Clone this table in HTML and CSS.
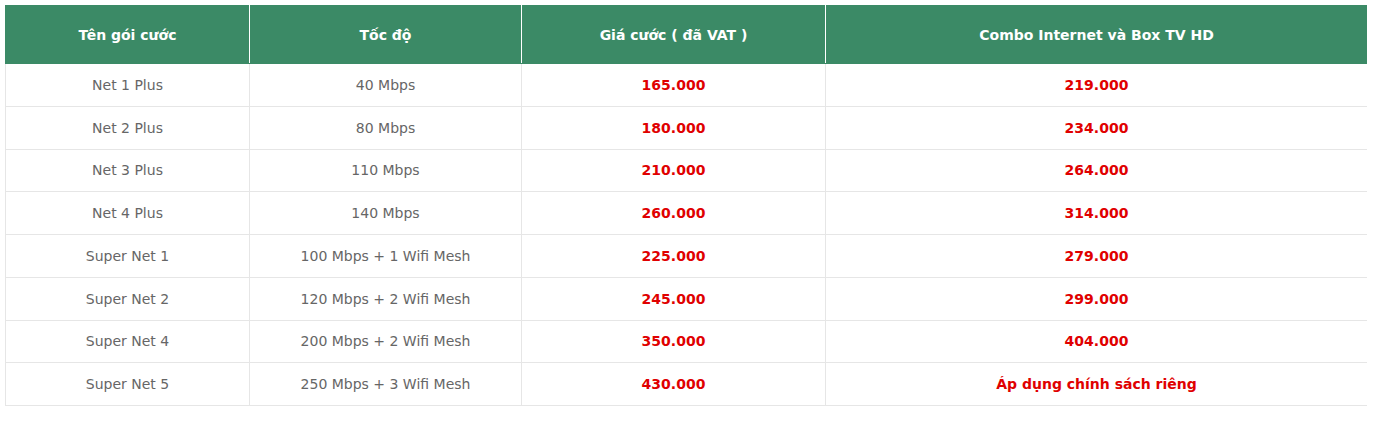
FILE: index.html
```html
<!DOCTYPE html>
<html lang="vi">
<head>
<meta charset="utf-8">
<title>Bảng giá</title>
<link rel="stylesheet" href="styles.css">
</head>
<body>
<table class="price-table">
  <colgroup>
    <col class="c1"><col class="c2"><col class="c3"><col class="c4">
  </colgroup>
  <thead>
    <tr>
      <th>Tên gói cước</th>
      <th>Tốc độ</th>
      <th>Giá cước ( đã VAT )</th>
      <th>Combo Internet và Box TV HD</th>
    </tr>
  </thead>
  <tbody>
    <tr><td>Net 1 Plus</td><td>40 Mbps</td><td class="price">165.000</td><td class="price">219.000</td></tr>
    <tr><td>Net 2 Plus</td><td>80 Mbps</td><td class="price">180.000</td><td class="price">234.000</td></tr>
    <tr><td>Net 3 Plus</td><td>110 Mbps</td><td class="price">210.000</td><td class="price">264.000</td></tr>
    <tr><td>Net 4 Plus</td><td>140 Mbps</td><td class="price">260.000</td><td class="price">314.000</td></tr>
    <tr><td>Super Net 1</td><td>100 Mbps + 1 Wifi Mesh</td><td class="price">225.000</td><td class="price">279.000</td></tr>
    <tr><td>Super Net 2</td><td>120 Mbps + 2 Wifi Mesh</td><td class="price">245.000</td><td class="price">299.000</td></tr>
    <tr><td>Super Net 4</td><td>200 Mbps + 2 Wifi Mesh</td><td class="price">350.000</td><td class="price">404.000</td></tr>
    <tr><td>Super Net 5</td><td>250 Mbps + 3 Wifi Mesh</td><td class="price">430.000</td><td class="price">Áp dụng chính sách riêng</td></tr>
  </tbody>
</table>
</body>
</html>
```

FILE: styles.css
```css
html, body {
  background: #ffffff;
}
body {
  margin: 5px 6px 5px 5px;
  font-family: "DejaVu Sans", Verdana, sans-serif;
  font-size: 14px;
  color: #666666;
}
.price-table {
  width: 1362px;
  border-collapse: collapse;
  table-layout: fixed;
}
.c1 { width: 244px; }
.c2 { width: 272px; }
.c3 { width: 304px; }
.c4 { width: 542px; }
.price-table th {
  background: #3b8a66;
  color: #ffffff;
  font-weight: bold;
  height: 58px;
  padding: 0 8px;
  text-align: center;
  vertical-align: middle;
  border: 1px solid #3b8a66;
  border-right-color: #ffffff;
  box-sizing: border-box;
}
.price-table th:last-child {
  border-right-color: #3b8a66;
}
.price-table td {
  height: 42.75px;
  padding: 0 8px;
  text-align: center;
  vertical-align: middle;
  border: 1px solid #e6e6e6;
  box-sizing: border-box;
}
.price-table td.price {
  color: #e00000;
  font-weight: bold;
}
```
